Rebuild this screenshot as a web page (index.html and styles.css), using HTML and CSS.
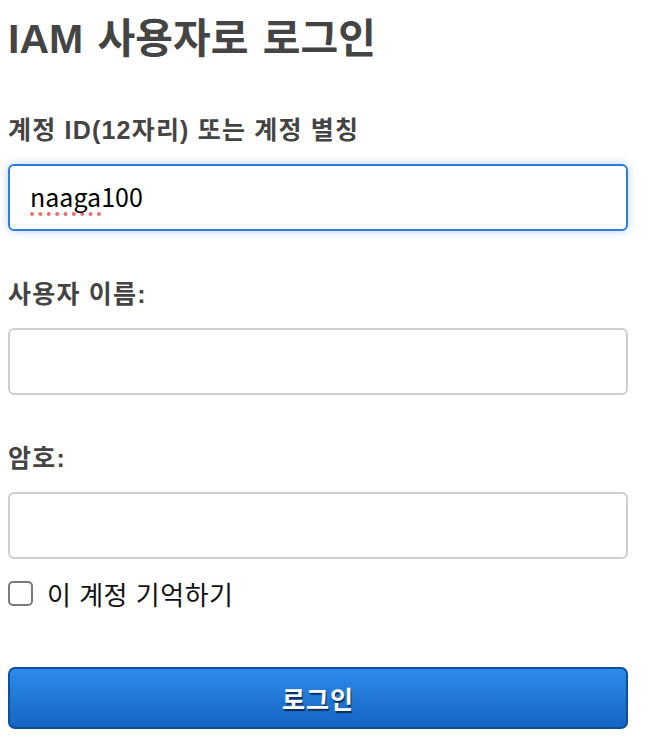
FILE: index.html
```html
<!DOCTYPE html>
<html lang="ko">
<head>
<meta charset="utf-8">
<title>IAM 사용자로 로그인</title>
<link rel="stylesheet" href="styles.css">
</head>
<body>
<form class="login">
  <h1 class="title">IAM 사용자로 로그인</h1>
  <div class="field">
    <label class="label" for="acct">계정 ID(12자리) 또는 계정 별칭</label>
    <div class="input input-focus" id="acct"><span class="misspelled">naaga</span>100</div>
  </div>
  <div class="field">
    <label class="label" for="user">사용자 이름:</label>
    <input class="input" id="user" type="text">
  </div>
  <div class="field">
    <label class="label" for="pw">암호:</label>
    <input class="input" id="pw" type="password">
  </div>
  <label class="remember"><span class="box"></span><span class="remember-text">이 계정 기억하기</span></label>
  <button class="submit" type="button">로그인</button>
</form>
</body>
</html>
```
FILE: styles.css
```css
* { box-sizing: border-box; }
html, body { margin: 0; padding: 0; background: #fff; }
body {
  padding: 8px;
  font-family: "Liberation Sans", Arial, "Noto Sans CJK KR", sans-serif;
  color: #444;
}
.login {
  width: 620px;
  display: flex;
  flex-direction: column;
}
.title {
  margin: 3px 0 0;
  height: 56px;
  line-height: 56px;
  font-size: 41px;
  font-weight: bold;
  color: #444;
  word-spacing: 3px;
}
.field {
  display: flex;
  flex-direction: column;
  gap: 19px;
}
.field:first-of-type { margin-top: 48px; }
.field + .field { margin-top: 48px; }
.label {
  display: block;
  height: 30px;
  line-height: 30px;
  font-size: 25px;
  font-weight: bold;
  letter-spacing: 1.2px;
  color: #444;
}
.input {
  display: block;
  width: 620px;
  height: 67px;
  border: 2px solid #cfcfcf;
  border-radius: 6px;
  background: #fff;
  font-family: "Noto Sans CJK KR", "Noto Sans", sans-serif;
  font-size: 25px;
  padding: 0 20px;
  outline: none;
}
.input-focus {
  border-color: #2d7fdc;
  box-shadow: 0 0 10px rgba(45, 127, 220, 0.35);
  line-height: 61px;
  color: #000;
}
.misspelled {
  text-decoration: underline dotted #f26d6d;
  text-decoration-thickness: 4px;
  text-underline-offset: 5px;
  text-decoration-skip-ink: none;
}
.remember {
  margin-top: 21px;
  height: 26px;
  display: flex;
  align-items: center;
  gap: 14px;
  font-family: "Noto Sans CJK KR", sans-serif;
  font-size: 26px;
  letter-spacing: 0.5px;
  color: #111;
}
.box {
  width: 25px;
  height: 25px;
  border: 2px solid #7a7a7a;
  border-radius: 5px;
  background: #fff;
  flex: none;
}
.submit {
  margin-top: 61px;
  width: 620px;
  height: 62px;
  border: 2px solid #0c4f9b;
  border-radius: 7px;
  background: linear-gradient(#2c8beb, #1664c2);
  color: #fff;
  font-family: "Noto Sans CJK KR", sans-serif;
  font-size: 25px;
  font-weight: bold;
  letter-spacing: 1px;
  text-shadow: 1px 2px 1px rgba(0, 0, 0, 0.6);
  cursor: pointer;
}
```
